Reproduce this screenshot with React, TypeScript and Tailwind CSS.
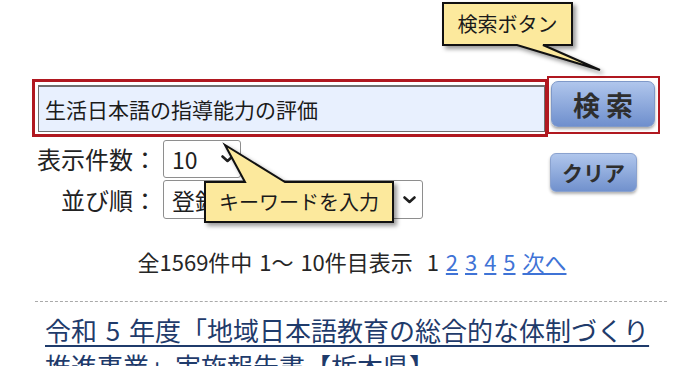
import React from 'react'

const jp = { fontFamily: '"Noto Sans CJK JP", "Noto Sans", sans-serif' }

function Chevron() {
  return (
    <svg width="13" height="8" viewBox="0 0 13 8" className="shrink-0">
      <path d="M1.5 1.5 L6.5 6 L11.5 1.5" fill="none" stroke="#1f1f1f" strokeWidth="2.6" strokeLinecap="round" strokeLinejoin="round" />
    </svg>
  )
}

function SelectBox({ value, width, height }: { value: string; width: string; height: string }) {
  return (
    <div className={`flex items-center justify-between border border-[#8e8e8e] rounded-[3px] bg-white pl-[8px] pr-[6px] ${width} ${height}`}>
      <span className="text-[23px] leading-[30px] text-[#1e1e1e] whitespace-nowrap">{value}</span>
      <Chevron />
    </div>
  )
}

// yellow speech bubble drawn as one shape, text laid over the box part
function Callout({
  className,
  w,
  h,
  path,
  box,
  text,
}: {
  className: string
  w: number
  h: number
  path: string
  box: string
  text: string
}) {
  return (
    <div className={`absolute ${className}`}>
      <svg width={w} height={h} viewBox={`0 0 ${w} ${h}`} className="[filter:drop-shadow(3px_3px_2px_rgba(0,0,0,0.4))]">
        <path d={path} fill="#fce99d" stroke="#111" strokeWidth="2" strokeLinejoin="miter" />
      </svg>
      <div className={`absolute flex items-center justify-center text-[20px] leading-none text-[#1a1a1a] ${box}`}>{text}</div>
    </div>
  )
}

export default function App() {
  return (
    <div className="relative w-[700px] h-[366px] overflow-hidden bg-white" style={jp}>
      {/* search row */}
      <div className="flex items-start pt-[76px] pl-[32px]">
        <div className="mt-[3px] w-[516px] h-[58px] border-[3px] border-[#b01820] pt-[3px] pl-[3px]">
          <div className="w-[507px] h-[47px] border border-[#6f6f6f] border-t-[2px] bg-[#e8f0fe] flex items-center pl-[6px]">
            <span className="text-[21px] leading-none text-[#1b1b1b]">生活日本語の指導能力の評価</span>
          </div>
        </div>
        <div className="-ml-[1px] w-[113px] h-[58px] border-2 border-[#b01820] pt-[3px] pl-[2px]">
          <div className="w-[104px] h-[46px] rounded-[7px] border border-[#7f99c9] bg-gradient-to-b from-[#b0c6ec] to-[#6f8fcd] shadow-[0_2px_3px_rgba(0,0,0,0.35)] flex items-center justify-center">
            <span className="text-[27px] font-bold leading-none text-[#2e2e2e] tracking-[6px] pl-[6px]">検索</span>
          </div>
        </div>
      </div>

      {/* options */}
      <div className="flex mt-[3px] pl-[32px]">
        <div className="w-[518px] flex flex-col gap-[2px]">
          <div className="flex items-center">
            <span className="w-[125px] text-right text-[24px] leading-none text-[#222]">表示件数：</span>
            <div className="ml-[6px]">
              <SelectBox value="10" width="w-[78px]" height="h-[38px]" />
            </div>
          </div>
          <div className="flex items-center">
            <span className="w-[125px] text-right text-[24px] leading-none text-[#222]">並び順：</span>
            <div className="ml-[6px]">
              <SelectBox value="登録日順" width="w-[260px]" height="h-[39px]" />
            </div>
          </div>
        </div>
        <div className="mt-[13px]">
          <div className="w-[87px] h-[39px] rounded-[6px] border border-[#8aa2cf] bg-gradient-to-b from-[#b0c6ec] to-[#7191cd] shadow-[0_2px_3px_rgba(0,0,0,0.3)] flex items-center justify-center">
            <span className="text-[21px] font-bold leading-none text-[#2e2e2e]">クリア</span>
          </div>
        </div>
      </div>

      {/* result count + pager */}
      <div className="mt-[26px] pl-[4px] text-center text-[22px] leading-[32px] [word-spacing:2px] text-[#262626] whitespace-nowrap">
        全1569件中 1～ 10件目表示{'\u00a0\u00a0'}1{' '}
        {['2', '3', '4', '5'].map((n) => (
          <React.Fragment key={n}>
            <a className="text-[#3f73d6] underline underline-offset-2">{n}</a>{' '}
          </React.Fragment>
        ))}
        <a className="text-[#3f73d6] underline underline-offset-2">次へ</a>
      </div>

      <div className="mt-[24px] ml-[35px] mr-[33px] border-t border-dashed border-[#aaaaaa]" />

      <div className="mt-[10px] pl-[45px] pr-[50px] text-[26px] leading-[36px]">
        <a className="text-[#1f3b6b] underline decoration-[1.5px] underline-offset-[4px] [word-spacing:3px]">
          令和 5 年度「地域日本語教育の総合的な体制づくり推進事業」実施報告書【栃木県】
        </a>
      </div>

      <Callout
        className="left-[440px] top-0"
        w={170}
        h={78}
        path="M3 3 H132 V45 H103 L160 70 L77 45 H3 Z"
        box="left-[3px] top-[3px] w-[129px] h-[42px]"
        text="検索ボタン"
      />
      <Callout
        className="left-[200px] top-[140px]"
        w={200}
        h={90}
        path="M5 42 H45 L25 5 L85 42 H193 V82 H5 Z"
        box="left-[5px] top-[42px] w-[188px] h-[40px]"
        text="キーワードを入力"
      />
    </div>
  )
}
